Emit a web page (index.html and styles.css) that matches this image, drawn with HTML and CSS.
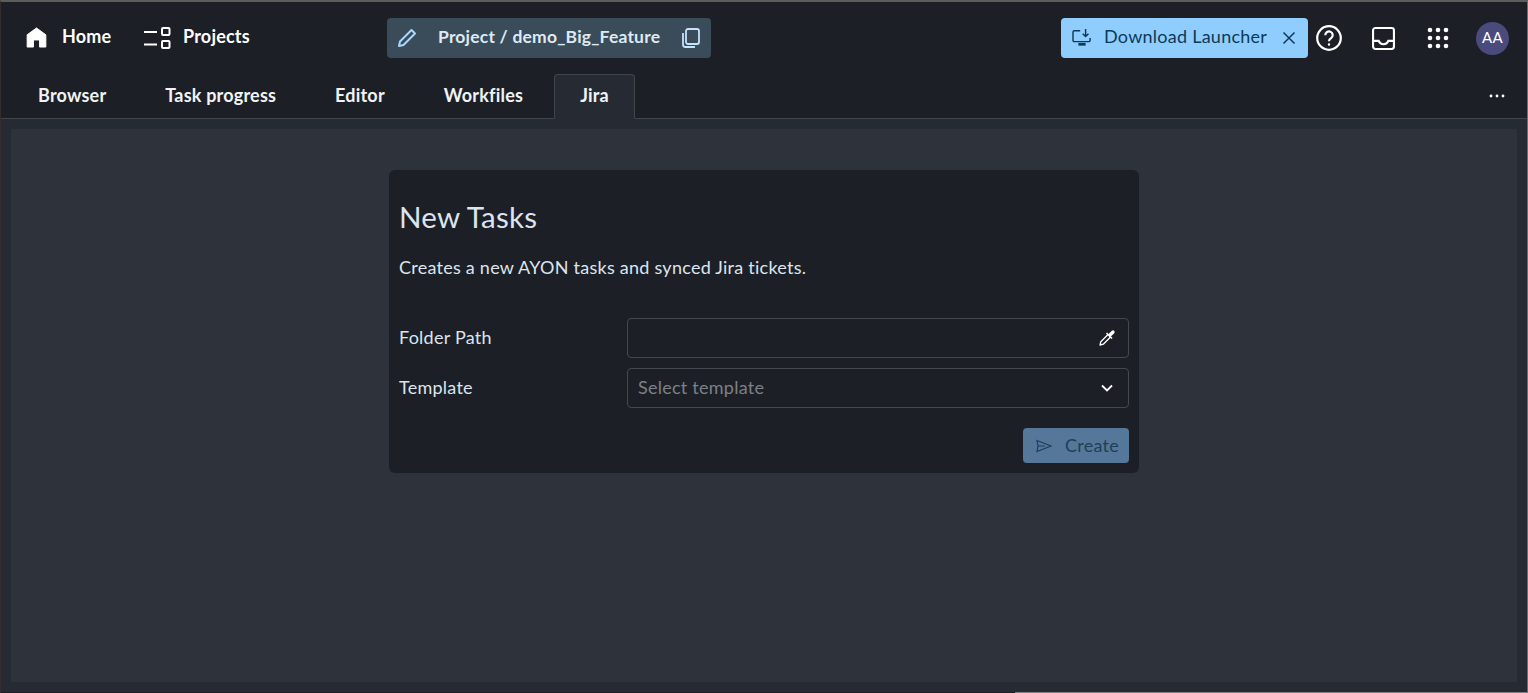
FILE: index.html
```html
<!DOCTYPE html>
<html lang="en">
<head>
    <meta charset="UTF-8">
    <meta name="viewport" content="width=device-width, initial-scale=1.0">
    <title>Jira</title>
    <link rel="stylesheet" href="styles.css">
</head>
<body>
    <header class="topbar">
        <div class="topbar-left">
            <a class="nav-link nav-home" href="#">
                <svg class="icon-home" viewBox="0 0 22 22"><path d="M11 1 1.200 8.200V21h6.600v-7.400h6.400V21h6.600V8.200z" fill="#fff" stroke="#fff" stroke-linejoin="round"/></svg>
                <span class="raised">Home</span>
            </a>
            <a class="nav-link nav-projects" href="#">
                <svg class="icon-projects" viewBox="0 0 27 22" fill="none" stroke="#fff" stroke-width="2"><path d="M0 5h13M0 17.500h13"/><rect x="18" y="1" width="7.500" height="7" rx="1"/><rect x="18" y="14" width="7.500" height="7" rx="1"/></svg>
                <span class="raised">Projects</span>
            </a>
        </div>
        <div class="project-pill">
            <svg class="icon-edit" viewBox="0 0 20 20" fill="none" stroke="#a9d8fb" stroke-width="2"><path d="M2 18l1-4.500L14.500 2 18 5.500 6.500 17z" stroke-linejoin="round"/></svg>
            <span class="project-name raised">Project / demo_Big_Feature</span>
            <svg class="icon-copy" viewBox="0 0 20 20" fill="none" stroke="#c4e4fc" stroke-width="1.800"><rect x="5" y="1" width="13" height="15" rx="2"/><path d="M2 5v11.500A2.500 2.500 0 0 0 4.500 19H14"/></svg>
        </div>
        <div class="topbar-right">
            <div class="launcher">
                <svg class="icon-install" viewBox="0 0 22 20" fill="none" stroke="#0d3a55" stroke-width="1.600"><path d="M9 2H2.500A1.500 1.500 0 0 0 1 3.500v9A1.500 1.500 0 0 0 2.500 14h16a1.500 1.500 0 0 0 1.500-1.500V10"/><path d="M15 0v8M11.800 5.200 15 8.400l3.200-3.200"/><path d="M7 17h8" stroke-width="3"/></svg>
                <span class="launcher-text raised">Download Launcher</span>
                <svg class="icon-close" viewBox="0 0 14 14" fill="none" stroke="#0d3a55" stroke-width="1.500"><path d="M1.500 1.500l11 11M12.500 1.500l-11 11"/></svg>
            </div>
            <svg class="icon-help" viewBox="0 0 26 26" fill="none" stroke="#fff" stroke-width="2.200"><circle cx="13" cy="13" r="11.800"/><path d="M9.300 10.200a3.700 3.700 0 1 1 5.800 3c-1.300.9-2.100 1.500-2.100 3"/><circle cx="13" cy="19.500" r=".6" fill="#fff" stroke-width="1.200"/></svg>
            <svg class="icon-inbox" viewBox="0 0 24 24" fill="none" stroke="#fff" stroke-width="2.200"><rect x="1.100" y="1.100" width="21.800" height="21.800" rx="2.500"/><path d="M1.500 14.500h5.500c1 2.800 2.600 3.500 5 3.500s4-.7 5-3.500h5.500"/></svg>
            <svg class="icon-apps" viewBox="0 0 22 22" fill="#fff"><circle cx="3" cy="3" r="2.300"/><circle cx="11" cy="3" r="2.300"/><circle cx="19" cy="3" r="2.300"/><circle cx="3" cy="11" r="2.300"/><circle cx="11" cy="11" r="2.300"/><circle cx="19" cy="11" r="2.300"/><circle cx="3" cy="19" r="2.300"/><circle cx="11" cy="19" r="2.300"/><circle cx="19" cy="19" r="2.300"/></svg>
            <div class="avatar"><span class="raised-small">AA</span></div>
        </div>
    </header>

    <nav class="tabs">
        <a class="tab" href="#">Browser</a>
        <a class="tab" href="#">Task progress</a>
        <a class="tab" href="#">Editor</a>
        <a class="tab" href="#">Workfiles</a>
        <a class="tab tab-active" href="#">Jira</a>
        <svg class="icon-more" viewBox="0 0 16 4" fill="#fff"><circle cx="2" cy="2" r="1.400"/><circle cx="8" cy="2" r="1.400"/><circle cx="14" cy="2" r="1.400"/></svg>
    </nav>

    <main class="content">
        <form class="card">
            <h1 class="card-title">New Tasks</h1>
            <p class="card-desc">Creates a new AYON tasks and synced Jira tickets.</p>
            <div class="form-row">
                <label class="form-label raised-small">Folder Path</label>
                <div class="field">
                    <svg class="icon-picker" viewBox="0 0 18 18" fill="none" stroke="#fff" stroke-width="1.300"><path d="M10 5.500 2.800 12.700 2 16l3.300-.8L12.500 8" stroke-linejoin="round"/><path d="M8.500 4l5.500 5.500" stroke-width="1.600"/><path d="M12 6l3-3" stroke-width="3.200" stroke-linecap="round"/></svg>
                </div>
            </div>
            <div class="form-row">
                <label class="form-label raised-small">Template</label>
                <div class="field">
                    <span class="placeholder raised-small">Select template</span>
                    <svg class="icon-chevron" viewBox="0 0 12 8" fill="none" stroke="#fff" stroke-width="1.800"><path d="M1 1.500l5 5 5-5"/></svg>
                </div>
            </div>
            <div class="form-actions">
                <button class="create-btn" type="button">
                    <svg class="icon-send" viewBox="0 0 16 14" fill="none" stroke="#1f3f58" stroke-width="1.200"><path d="M1 1.500 15 7 1 12.500l1-5.500zM2 7h7"/></svg>
                    <span class="raised-small">Create</span>
                </button>
            </div>
        </form>
    </main>
    <div class="bottom-edge"></div>
</body>
</html>
```

FILE: styles.css
```css
* {
    box-sizing: border-box;
}

html, body {
    height: 100%;
}

body {
    margin: 0;
    display: flex;
    flex-direction: column;
    overflow: hidden;
    font-family: "Lato", sans-serif;
    font-size: 18px;
    letter-spacing: .25px;
    font-variant-ligatures: none;
    color: #e0e6ee;
    background-color: #262b33;
    border-top: 2px solid #5c5c5c;
    border-left: 1px solid #352c30;
    border-right: 1px solid #6a6e73;
}

a {
    color: inherit;
    text-decoration: none;
}

svg {
    display: block;
    flex-shrink: 0;
}

/* lato sits lower than the original font */
.raised {
    margin-top: -4px;
}

.raised-small {
    margin-top: -2px;
}

.topbar {
    height: 72px;
    padding: 16px 18px 16px 25px;
    display: flex;
    align-items: center;
    background-color: #1c2026;
}

.topbar-left {
    width: 361px;
    display: flex;
    align-items: center;
}

.nav-link {
    display: flex;
    align-items: center;
    color: #fff;
    font-weight: 700;
    font-size: 18px;
    letter-spacing: .2px;
}

.nav-home {
    width: 118px;
    gap: 15px;
}

.nav-projects {
    gap: 12px;
}

.icon-home {
    width: 21px;
    height: 21px;
    margin-bottom: 1px;
}

.icon-projects {
    width: 27px;
    height: 22px;
}

.project-pill {
    width: 324px;
    height: 40px;
    padding: 0 10px;
    display: flex;
    align-items: center;
    background-color: #3a4c59;
    border-radius: 4px;
    color: #ddeaf5;
    font-weight: 700;
    font-size: 17.500px;
    letter-spacing: .2px;
}

.icon-edit {
    width: 20px;
    height: 20px;
}

.project-name {
    margin-left: 21px;
    flex: 1;
}

.icon-copy {
    width: 20px;
    height: 20px;
}

.topbar-right {
    margin-left: auto;
    display: flex;
    align-items: center;
}

.launcher {
    width: 247px;
    height: 40px;
    padding: 0 12px 0 11px;
    display: flex;
    align-items: center;
    background-color: #90cdff;
    border-radius: 4px;
    color: #0d3a55;
}

.icon-install {
    width: 20px;
    height: 18px;
}

.launcher-text {
    margin-left: 12px;
    flex: 1;
}

.icon-close {
    width: 14px;
    height: 14px;
}

.icon-help {
    width: 26px;
    height: 26px;
    margin-left: 8px;
}

.icon-inbox {
    width: 23px;
    height: 23px;
    margin-left: 30px;
}

.icon-apps {
    width: 22px;
    height: 22px;
    margin-left: 32px;
}

.avatar {
    width: 33px;
    height: 33px;
    margin-left: 27px;
    display: flex;
    align-items: center;
    justify-content: center;
    background-color: #4b4a7c;
    border-radius: 50%;
    color: #fff;
    font-size: 15px;
}

.tabs {
    height: 45px;
    padding: 0 22px 0 10px;
    display: flex;
    align-items: flex-end;
    gap: 5px;
    background-color: #1c2026;
    border-bottom: 1px solid #41464d;
}

.tab {
    height: 45px;
    margin-bottom: -1px;
    padding: 0 26px 4px;
    display: flex;
    align-items: center;
    color: #f0f3f7;
    font-weight: 700;
    letter-spacing: .2px;
    border: 1px solid transparent;
    border-radius: 4px 4px 0 0;
}

.tab-active {
    margin-left: -1px;
    padding: 0 25px 4px;
    background-color: #262b33;
    border-color: #41464d;
    border-bottom-color: #262b33;
}

.icon-more {
    width: 16px;
    height: 4px;
    margin-left: auto;
    align-self: center;
}

.content {
    flex: 1;
    margin: 10px 10px 10px;
    padding-top: 41px;
    display: flex;
    justify-content: center;
    align-items: flex-start;
    background-color: #2e333b;
}

.card {
    width: 750px;
    height: 303px;
    padding: 0 10px;
    background-color: #1c2026;
    border-radius: 6px;
}

.card-title {
    margin: 27px 0 0;
    font-size: 29.500px;
    line-height: 40px;
    font-weight: 400;
    color: #dce4ef;
}

.card-desc {
    margin: 20px 0 41px;
    line-height: 20px;
    color: #dce4ef;
}

.form-row {
    height: 40px;
    margin-bottom: 10px;
    display: flex;
    align-items: center;
}

.form-label {
    width: 228px;
    color: #dce4ef;
}

.field {
    flex: 1;
    height: 40px;
    padding: 0 12px 0 10px;
    display: flex;
    align-items: center;
    justify-content: flex-end;
    border: 1px solid #44484f;
    border-radius: 4px;
}

.placeholder {
    margin-right: auto;
    color: #7b8088;
}

.icon-picker {
    width: 18px;
    height: 18px;
}

.icon-chevron {
    width: 12px;
    height: 8px;
    margin-right: 3px;
}

.form-actions {
    margin-top: 20px;
    display: flex;
    justify-content: flex-end;
}

.create-btn {
    width: 106px;
    height: 35px;
    padding: 0 10px 0 13px;
    display: flex;
    align-items: center;
    justify-content: space-between;
    background-color: #55789a;
    border: none;
    border-radius: 4px;
    color: #1f3f58;
    font-family: inherit;
    font-size: 18px;
    letter-spacing: .25px;
    font-variant-ligatures: none;
}

.icon-send {
    width: 16px;
    height: 14px;
}

.bottom-edge {
    height: 1px;
    margin-left: -1px;
    background: linear-gradient(to right, #1c1e22 1015px, #80857f 1015px);
}
```
